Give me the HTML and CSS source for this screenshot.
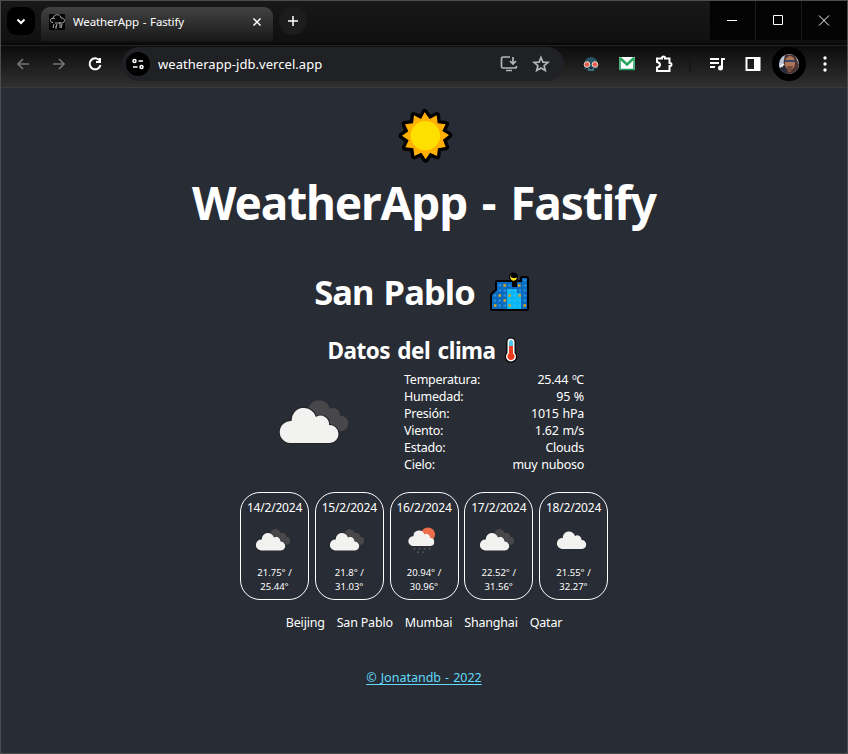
FILE: index.html
```html
<!DOCTYPE html>
<html lang="es">
<head>
<meta charset="utf-8">
<title>WeatherApp - Fastify</title>
<link rel="stylesheet" href="styles.css">
</head>
<body>
<svg class="defs" width="0" height="0">
  <symbol id="cloud" viewBox="0 0 60 38"><path d="M11 37a11 11 0 0 1 1.500-22A12.500 12.500 0 0 1 37 11A8.500 8.500 0 0 1 50 19A9 9 0 0 1 51 37z" fill="#f2f2f0"/></symbol>
  <symbol id="clouds" viewBox="0 0 70 44">
    <g fill="#48484a"><circle cx="40" cy="11" r="10.800"/><circle cx="54" cy="15" r="7"/><circle cx="61.500" cy="23.500" r="7.800"/><path d="M40 11 54 9l8 22H48z"/></g>
    <path d="M11 43a11 11 0 0 1 1.500-22A12.500 12.500 0 0 1 37 17A8.500 8.500 0 0 1 50 25A9 9 0 0 1 51 43z" fill="#f2f2f0" stroke="#222327" stroke-width="2" paint-order="stroke"/>
  </symbol>
</svg>
<div class="window">
  <header class="tabstrip">
    <div class="tab-search"><svg width="12" height="12" viewBox="0 0 12 12"><path d="M2.500 4.500 6 8l3.500-3.500" class="stroke bold"/></svg></div>
    <div class="tab">
      <svg width="16" height="16" viewBox="0 0 16 16"><path fill="#050505" d="M0 0h16v16H0z"/><path d="M4 8.500C0 8 1 4 4 4.500 5-1 12 0 12 4c5 0 4 5 1 5H6M4 4l2 1M5 10l-1 4M8 10l-1 3M11 8v6M13 10l-1 4M7 12v3" fill="none" stroke="#aaa"/></svg>
      <span class="tab-title">WeatherApp - Fastify</span>
      <svg class="tab-close" width="10" height="10" viewBox="0 0 10 10"><path d="m1.500 1.500 7 7m0-7-7 7" class="stroke"/></svg>
    </div>
    <div class="new-tab"><svg width="12" height="12" viewBox="0 0 12 12"><path d="M6 1v10M1 6h10" class="stroke"/></svg></div>
    <div class="controls">
      <div><svg width="12" height="12" viewBox="0 0 12 12"><path d="M1 5.500h10" stroke="#fff"/></svg></div>
      <div><svg width="12" height="12" viewBox="0 0 12 12"><path d="M1.500.5h9v9h-9z" fill="none" stroke="#fff"/></svg></div>
      <div><svg width="12" height="12" viewBox="0 0 12 12"><path d="m1 .5 10 10m0-10-10 10" stroke="#fff"/></svg></div>
    </div>
  </header>
  <nav class="toolbar">
    <svg class="back" width="14" height="14" viewBox="0 0 14 14"><path d="M13 7H2m5-5L2 7l5 5" class="stroke dim"/></svg>
    <svg class="forward" width="14" height="14" viewBox="0 0 14 14"><path d="M1 7h11M7 2l5 5-5 5" class="stroke dim"/></svg>
    <svg class="reload" width="16" height="16" viewBox="0 0 16 16"><path d="M12.500 4.500A5.500 5.500 0 1 0 13.500 9M13 2v4H9" class="stroke bold"/></svg>
    <div class="omnibox">
      <span class="site-info"><svg width="14" height="14" viewBox="0 0 14 14"><g class="stroke"><circle cx="3.500" cy="4" r="1.500"/><path d="M7.500 4H12M2 10h4.500"/><circle cx="10.500" cy="10" r="1.500"/></g></svg></span>
      <span class="url">weatherapp-jdb.vercel.app</span>
      <svg class="install" width="18" height="18" viewBox="0 0 18 18"><path d="M10 2H3Q1.500 2 1.500 3.500v8Q1.500 13 3 13h12q1.500 0 1.500-2M6 15.500h6M13 2v7m-3-3 3 3 3-3" class="stroke mid"/></svg>
      <svg class="star" width="18" height="18" viewBox="0 0 18 18"><path d="m9 2.500 1.900 4.600 5 .4-3.800 3.200 1.200 4.800L9 12.900l-4.300 2.600 1.200-4.800-3.800-3.200 5-.4z" class="stroke mid"/></svg>
    </div>
    <svg class="ext-owl" width="16" height="16" viewBox="0 0 16 16"><path d="M1.500 8Q2 1 8 1t6.500 7v5h-13z" fill="#285565"/><path d="M3 11h10v4H3z" fill="#172b3b"/><path d="M6 12v3m2-2v2m2-3v3" stroke="#69b6bd"/><g fill="#e65c4c" stroke="#eed8d0" stroke-width="1"><circle cx="4" cy="8.500" r="2.800"/><circle cx="12" cy="8.500" r="2.800"/></g></svg>
    <svg class="ext-mail" width="16" height="14" viewBox="0 0 16 14"><path fill="#fff" d="M0 0h16v13H0z"/><path d="M1 .5v12h14V.5" fill="none" stroke="#18985a" stroke-width="1.500"/><path d="m1 1 7 6.500L15 1" fill="none" stroke="#28a45c" stroke-width="2.500"/></svg>
    <svg class="puzzle" width="18" height="18" viewBox="0 0 18 18"><path d="M2 3.500h5V3a1.500 1.500 0 0 1 3 0v.5h4.500V8h.5a1.500 1.500 0 0 1 0 3h-.5v5H2v-3.500q3-.5 3-2.700T2 7z" class="stroke bold"/></svg>
    <span class="divider"></span>
    <svg class="media" width="17" height="14" viewBox="0 0 17 14"><path d="M1 2h9M1 6h9M1 10h5" class="stroke bold"/><path d="M13 11V2h3" class="stroke bold"/><circle cx="11.500" cy="11" r="2.500" fill="#fff"/></svg>
    <svg class="panel" width="16" height="16" viewBox="0 0 16 16"><path d="M1.500 2h13v12h-13z" class="stroke bold"/><path d="M9 2h6v12H9z" fill="#fff"/></svg>
    <span class="profile"><svg width="20" height="20" viewBox="0 0 20 20"><defs><clipPath id="face"><circle cx="10" cy="10" r="10"/></clipPath></defs><g clip-path="url(#face)"><path fill="#b9c5d5" d="M0 0h20v20H0z"/><path fill="#4a3330" d="m6 0 10 1 4 10-2 9H5l-1-8z"/><path fill="#272b39" d="M0 14l6-2 3 8H0z"/><ellipse cx="11" cy="9" rx="5" ry="7" fill="#af7558"/><path d="M6 7h10" stroke="#354366" stroke-width="2"/><path d="M8 12h6l-2 6H9z" fill="#744b3e"/><path d="m0 13 5-3" stroke="#eee" stroke-width="2"/></g></svg></span>
    <svg class="more" width="4" height="16" viewBox="0 0 4 16" fill="#fff"><circle cx="2" cy="2" r="1.700"/><circle cx="2" cy="8" r="1.700"/><circle cx="2" cy="14" r="1.700"/></svg>
  </nav>
  <main>
    <svg class="sun" width="70" height="70" viewBox="0 0 210 210"><path d="M107 37 122 57 143 46 146 70 170 73 160 93 180 105 162 119 170 141 147 145 144 168 123 158 110 178 97 158 76 168 73 145 49 142 59 121 39 107 58 94 48 73 72 70 75 46 96 57z" fill="#ffb002" stroke="#000" stroke-width="20" stroke-linejoin="round" paint-order="stroke"/><circle cx="109" cy="107" r="44" fill="#fee000"/></svg>
    <h1><span>WeatherApp - Fastify</span></h1>
    <h2><span>San Pablo</span>
      <svg width="40" height="40" viewBox="0 0 40 40"><path d="M2 36V22l5-5V9h15v5h5v-5h5V5h5v31z" fill="#0869bd" stroke="#000" stroke-width="4" stroke-linejoin="round" paint-order="stroke"/><path d="M17 16h10v4h4v16H17z" fill="#08b8f4"/><path d="M22 8h5v6h-5z" fill="#000"/><circle cx="23.500" cy="4" r="4.500" fill="#000"/><path d="M21.500.5q-2.500 6 5.500 4-.8 3.500-4.200 3.200Q18.500 6 21.500.5" fill="#ffe017"/><g stroke="#4cc0ff" stroke-opacity=".5" stroke-width="2" stroke-dasharray="2.500 2.500"><path d="M8.500 12.500h12M8.500 17.500h28M3.500 22.500h33M3.500 27.500h33M3.500 32.500h33M33.500 7.500h2.500M33.500 12.500h2.500"/></g><path d="M13.500 12.500H16m12 0h2.500M8.500 22.500H11m7.500 0H21m7.500 0H31m-17.500 5H16m-12 5h2.500m12 0H21m12.500 0H36" stroke="#dba21f" stroke-width="2.400"/></svg>
    </h2>
    <h3><span>Datos del clima</span>
      <svg width="14" height="26" viewBox="0 0 14 26"><path d="M3.500 5a3.500 3.500 0 0 1 7 0v11a5 5 0 1 1-7 0z" fill="#fff" stroke="#000" stroke-width="2.400" paint-order="stroke"/><path d="M5 5a2 2 0 0 1 4 0v4H5z" fill="#4cc7ee"/><path d="M5 9h4v7.500a3.600 3.600 0 1 1-4 0z" fill="#ed3b20"/></svg>
    </h3>
    <section class="current">
      <svg class="current-icon" width="70" height="44"><use href="#clouds"/></svg>
      <dl>
        <div><dt>Temperatura:</dt><dd>25.44 ºC</dd></div>
        <div><dt>Humedad:</dt><dd>95 %</dd></div>
        <div><dt>Presión:</dt><dd>1015 hPa</dd></div>
        <div><dt>Viento:</dt><dd>1.62 m/s</dd></div>
        <div><dt>Estado:</dt><dd>Clouds</dd></div>
        <div><dt>Cielo:</dt><dd>muy nuboso</dd></div>
      </dl>
    </section>
    <section class="forecast">
      <article><time>14/2/2024</time><svg width="50" height="50" viewBox="0 0 100 100"><use href="#clouds" x="11" y="28" width="70" height="44"/></svg><p>21.75° /<br>25.44°</p></article>
      <article><time>15/2/2024</time><svg width="50" height="50" viewBox="0 0 100 100"><use href="#clouds" x="11" y="28" width="70" height="44"/></svg><p>21.8° /<br>31.03°</p></article>
      <article><time>16/2/2024</time><svg width="50" height="50" viewBox="0 0 100 100"><circle cx="58" cy="39" r="14" fill="#ec6e4c"/><use href="#cloud" x="18" y="29" width="53" height="34"/><path d="m32 66-2 3m12-3-2 3m12-3-2 3m12-3-2 3M39 73l-2 3m12-3-2 3" stroke="#55575b" stroke-width="3"/></svg><p>20.94° /<br>30.96°</p></article>
      <article><time>17/2/2024</time><svg width="50" height="50" viewBox="0 0 100 100"><use href="#clouds" x="11" y="28" width="70" height="44"/></svg><p>22.52° /<br>31.56°</p></article>
      <article><time>18/2/2024</time><svg width="50" height="50" viewBox="0 0 100 100"><use href="#cloud" x="15" y="31" width="60" height="38"/></svg><p>21.55° /<br>32.27°</p></article>
    </section>
    <ul class="cities"><li>Beijing</li><li>San Pablo</li><li>Mumbai</li><li>Shanghai</li><li>Qatar</li></ul>
    <footer><a href="#">© Jonatandb - 2022</a></footer>
  </main>
</div>
</body>
</html>
```
FILE: styles.css
```css
* { box-sizing: border-box; }
body { margin: 0; background: #282c34; color: #fff; font-family: "Noto Sans", "Open Sans", sans-serif; font-size: 12.5px; line-height: 17px; }
svg { display: block; flex: none; overflow: visible; }
.defs { position: absolute; }
.window { width: 848px; height: 754px; border: 1px solid #4c4d4f; overflow: hidden; }
.stroke { fill: none; stroke: #fff; stroke-width: 1.5; }
.stroke.bold { stroke-width: 2; }
.stroke.dim { stroke: #747474; stroke-width: 1.7; }
.stroke.mid { stroke: #b4b5b7; stroke-width: 1.7; }

.tabstrip { display: flex; height: 44px; background: linear-gradient(#181818, #101010); border-bottom: 2px solid #080808; }
.tab-search { display: grid; place-items: center; width: 28px; height: 28px; margin: 6px 6px 0; border-radius: 9px; background: #000; }
.tab { display: flex; align-items: center; width: 232px; height: 34px; margin-top: 6px; padding: 0 11px 5px 8px; border-radius: 9px 9px 0 0; background: linear-gradient(#424242, #191919); font-size: 11.5px; }
.tab-title { margin-left: 8px; white-space: nowrap; letter-spacing: -.15px; word-spacing: 1px; }
.tab-close { margin-left: auto; }
.new-tab { display: grid; place-items: center; width: 28px; height: 28px; margin: 6px 0 0 6px; border-radius: 50%; background: #1c1c1c; }
.controls { display: flex; gap: 1px; height: 39px; margin-left: auto; background: #1a1a1a; }
.controls div { display: grid; place-items: center; width: 45px; padding-right: 2px; background: #030303; }

.toolbar { display: flex; align-items: center; height: 43px; padding: 0 20px 5px 15px; background: linear-gradient(#0c0c0c, #303030); border-top: 1px solid #242424; border-bottom: 1px solid #3a3a3e; }
.forward { margin-left: 22px; }
.reload { margin-left: 21px; }
.omnibox { display: flex; align-items: center; width: 443px; height: 34px; margin-left: 19px; padding: 0 14px 0 4px; border-radius: 17px; background: #202125; }
.site-info { display: grid; place-items: center; width: 24px; height: 24px; border-radius: 50%; background: #000; }
.url { margin-left: 8px; font-size: 13px; letter-spacing: .05px; }
.install { margin-left: auto; }
.star { margin-left: 14px; }
.ext-owl { margin-left: 19px; }
.ext-mail { margin-left: 20px; }
.puzzle { margin-left: 20px; }
.divider { width: 2px; height: 16px; margin-left: 16px; background: #161616; }
.media { margin-left: 18px; }
.panel { margin-left: 19px; }
.profile { display: grid; place-items: center; width: 34px; height: 34px; margin-left: 11px; border-radius: 50%; background: #000; }
.more { margin-left: 17px; }

main { display: flex; flex-direction: column; align-items: center; padding-top: 12px; }
h1, h2, h3, dl, dd, p, ul { margin: 0; padding: 0; }
h1 { margin-top: 1px; font-size: 46px; line-height: 62px; letter-spacing: -1.15px; word-spacing: 4px; white-space: nowrap; }
h2 { display: flex; align-items: center; gap: 15px; height: 48px; margin-top: 35px; padding-right: 4px; font-size: 34.5px; letter-spacing: -.9px; word-spacing: 2px; }
h2 svg { margin-top: 2px; }
h2 span { margin-top: -2px; white-space: nowrap; }
h3 { display: flex; align-items: center; gap: 8px; height: 30px; margin-top: 19px; padding-right: 3px; font-size: 22.5px; letter-spacing: -.5px; word-spacing: 2px; white-space: nowrap; }
.current { display: flex; align-items: center; width: 305px; height: 102px; margin: 6px 0 0 15px; }
dl { width: 180px; margin-left: auto; letter-spacing: -.25px; word-spacing: .8px; }
dl div { display: flex; justify-content: space-between; }
.forecast { display: flex; gap: 5.75px; margin-top: 19px; }
article { display: flex; flex-direction: column; align-items: center; width: 69px; height: 108px; padding-top: 7px; border: 1px solid #fff; border-radius: 20px; text-align: center; }
time { font-size: 12px; letter-spacing: -.2px; line-height: 15px; white-space: nowrap; }
article p { margin-top: 1px; font-size: 9.5px; line-height: 14px; }
.cities { display: flex; gap: 12px; margin-top: 14px; list-style: none; white-space: nowrap; letter-spacing: -.2px; }
footer { margin-top: 38px; }
a { color: #61dafb; text-underline-offset: 2px; word-spacing: .8px; }
```
